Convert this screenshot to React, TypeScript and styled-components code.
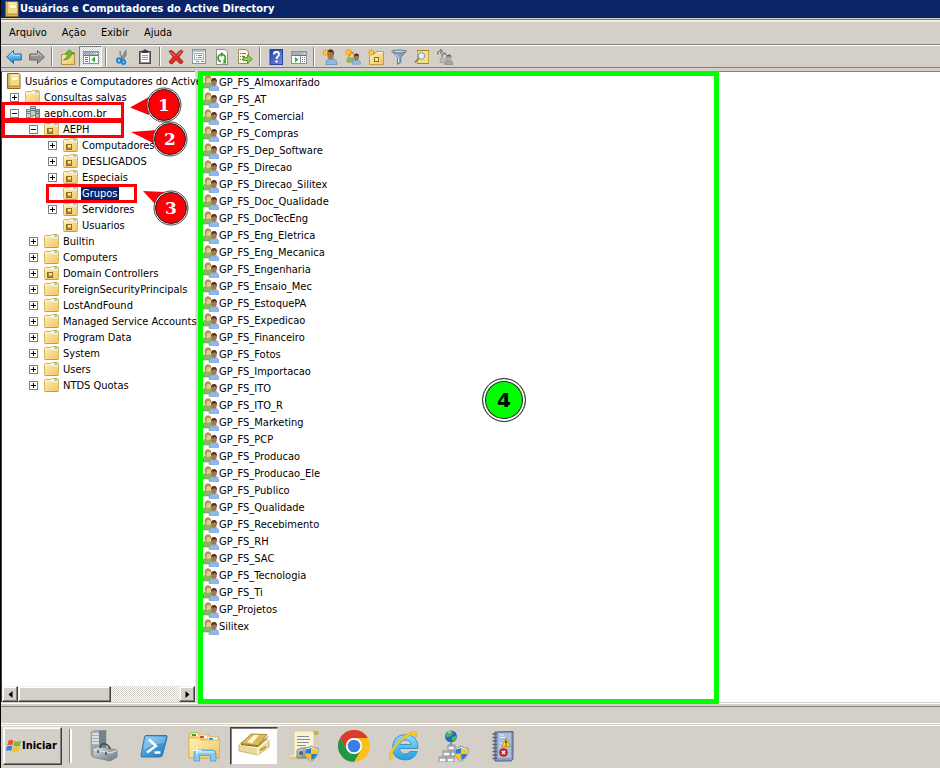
import React from "react";
import type { ReactNode } from "react";
import styled, { createGlobalStyle, css } from "styled-components";

const face = "#d4d0c8";
const navy = "#0a246a";
const red = "#fb0007";
const green = "#00ff00";

const GlobalStyle = createGlobalStyle`
  * { box-sizing: border-box; }
  body {
    margin: 0;
    background: ${face};
    color: #000;
    font: 11px/16px "DejaVu Sans Condensed", "Noto Sans", sans-serif;
  }
  button {
    margin: 0;
    padding: 0;
    border: 0;
    background: none;
    color: inherit;
    font: inherit;
  }
  ul { margin: 0; padding: 0; list-style: none; }
  svg { display: block; flex: none; }
`;

/* ---------- layout ---------- */

const Page = styled.div`
  display: flex;
  flex-direction: column;
  min-height: 100vh;
  background: ${face};
  border-left: 1px solid #000;
`;

const TitleBar = styled.header`
  display: flex;
  align-items: center;
  height: 18px;
  padding-left: 3px;
  background: ${navy};
`;

const Title = styled.h1`
  margin: 0;
  color: #fff;
  font-size: 11px;
  line-height: 18px;
  font-weight: 700;
  white-space: nowrap;
`;

const MenuBar = styled.nav`
  display: flex;
  align-items: center;
  height: 26px;
  margin-top: 1px;
  padding-top: 2px;
  border-top: 1px solid #808080;
  border-bottom: 1px solid #808080;
  box-shadow: inset 0 2px 0 #f1efea;
`;

const MenuItem = styled.button`
  padding: 0 7px 0 8px;
`;

const Toolbar = styled.div`
  display: flex;
  align-items: center;
  height: 23px;
  padding-left: 1px;
  border-top: 1px solid #fff;
  border-bottom: 1px solid #808080;
`;

const checker = css`
  background: repeating-conic-gradient(#fff 0 25%, ${face} 0 50%) 0 0 / 2px 2px;
`;

const ToolButton = styled.button<{ $pressed?: boolean }>`
  display: flex;
  align-items: center;
  justify-content: center;
  width: 23px;
  height: 21px;
  ${(p) =>
    p.$pressed &&
    css`
      ${checker}
      border: 1px solid;
      border-color: #808080 #fff #fff #808080;
    `}
`;

const ToolSeparator = styled.span`
  width: 2px;
  height: 19px;
  margin: 0 3px;
  border-left: 1px solid #808080;
  border-right: 1px solid #fff;
`;

const Workspace = styled.main`
  display: flex;
  flex: 1;
  margin-top: 3px;
  background: #fff;
`;

const TreePane = styled.section`
  position: relative;
  display: flex;
  flex-direction: column;
  flex: none;
  width: 194px;
  border-top: 1px solid #808080;
  border-left: 1px solid #404040;
`;

const TreeList = styled.ul`
  flex: 1;
  padding-top: 1px;
`;

const TreeRow = styled.li<{ $level: number }>`
  display: flex;
  align-items: center;
  height: 16px;
  padding-left: ${(p) => (p.$level === 0 ? 4 : p.$level * 19 - 15)}px;
  white-space: nowrap;
`;

const ExpanderCell = styled.span`
  display: flex;
  flex: none;
  width: 19px;
  padding-left: 4px;
`;

const Expander = styled.button`
  display: block;
  width: 9px;
  height: 9px;
`;

const NodeIcon = styled.span`
  flex: none;
  width: 18px;
`;

const NodeLabel = styled.button<{ $selected?: boolean }>`
  height: 14px;
  padding: 0 1px;
  line-height: 16px;
  ${(p) =>
    p.$selected &&
    css`
      background: ${navy};
      color: #fff;
    `}
`;

const Scrollbar = styled.div`
  display: flex;
  height: 16px;
  ${checker}
`;

const raised = css`
  background: ${face};
  border: 1px solid;
  border-color: #f4f2ee #404040 #404040 #f4f2ee;
  box-shadow: inset -1px -1px 0 #808080, inset 1px 1px 0 #fff;
`;

const ScrollArrow = styled.button`
  display: flex;
  align-items: center;
  justify-content: center;
  width: 16px;
  ${raised}
`;

const ScrollThumb = styled.div`
  flex: 92;
  ${raised}
`;

const ScrollRest = styled.div`
  flex: 69;
`;

const Splitter = styled.div`
  width: 3px;
  flex: none;
  background: ${face};
  border-left: 1px solid #ece9e2;
`;

const ListPane = styled.section`
  position: relative;
  flex: 1;
  padding: 2px 0 0 5px;
  border-top: 1px solid #808080;
`;

const GroupRow = styled.li`
  display: flex;
  align-items: center;
  height: 17px;
  white-space: nowrap;
`;

const StatusBar = styled.footer`
  height: 24px;
  border-top: 1px solid ${face};
  box-shadow: inset 0 1px 0 #fff, inset 0 3px 0 ${face}, inset 0 4px 0 #808080,
    inset 0 -1px 0 #fff, inset 0 -2px 0 ${face}, inset 0 -3px 0 #fff;
`;

const Taskbar = styled.footer`
  display: flex;
  align-items: center;
  height: 42px;
  padding: 1px 0 3px 2px;
`;

const StartButton = styled.button`
  display: flex;
  align-items: center;
  width: 59px;
  height: 38px;
  padding-left: 2px;
  font-weight: 700;
  ${raised}
`;

const TaskDivider = styled.span`
  width: 3px;
  height: 34px;
  margin: 0 7px;
  border-left: 1px solid #808080;
  border-right: 2px solid #fff;
`;

const TaskButton = styled.button<{ $active?: boolean }>`
  display: flex;
  align-items: center;
  justify-content: center;
  width: 48px;
  height: 38px;
  margin: 0 1px;
  ${(p) =>
    p.$active &&
    css`
      background: #fff;
      border: 1px solid;
      border-color: #404040 ${face} ${face} #404040;
      box-shadow: inset 1px 1px 0 #808080;
      padding-bottom: 5px;
    `}
`;

/* ---------- annotations lying over the window ---------- */

const RedFrame = styled.span<{ $x: number; $y: number; $w: number; $h: number }>`
  position: absolute;
  left: ${(p) => p.$x}px;
  top: ${(p) => p.$y}px;
  width: ${(p) => p.$w}px;
  height: ${(p) => p.$h}px;
  border: 3px solid ${red};
  pointer-events: none;
`;

const CalloutBox = styled.span<{ $x: number; $y: number }>`
  position: absolute;
  left: ${(p) => p.$x}px;
  top: ${(p) => p.$y}px;
  display: grid;
  width: 36px;
  height: 36px;
  place-items: center;
  color: #fff;
  font: 700 17px/36px "DejaVu Serif", serif;
  pointer-events: none;

  > * { grid-area: 1 / 1; }
  svg { overflow: visible; }
`;

const CalloutNumber = styled.span`
  position: relative;
`;

const GreenFrame = styled.div`
  position: absolute;
  inset: -1px auto -2px 0;
  width: 70.2%;
  border: 5px solid ${green};
  pointer-events: none;
`;

const GreenBadge = styled.span`
  position: absolute;
  left: 284px;
  top: 306px;
  display: flex;
  align-items: center;
  justify-content: center;
  width: 44px;
  height: 44px;
  border: 1px solid #333;
  border-radius: 50%;
  background: ${green};
  box-shadow: inset 0 0 0 2px #fff, inset 0 0 0 3px #222;
  font: 700 20px/40px "DejaVu Sans", sans-serif;
  pointer-events: none;
`;

function Callout({ n, x, y, tail }: { n: number; x: number; y: number; tail: string }) {
  return (
    <CalloutBox $x={x} $y={y}>
      <svg width="36" height="36" viewBox="0 0 36 36" aria-hidden="true">
        <path d={tail} fill={red} />
        <circle cx="18" cy="18" r="17" fill="#fff" stroke="#444" />
        <circle cx="18" cy="18" r="15.5" fill={red} stroke="#222" />
      </svg>
      <CalloutNumber>{n}</CalloutNumber>
    </CalloutBox>
  );
}

/* ---------- small icons ---------- */

function Icon({ children, size = 16, box = 16 }: { children: ReactNode; size?: number; box?: number }) {
  return (
    <svg width={size} height={size} viewBox={`0 0 ${box} ${box}`} aria-hidden="true">
      {children}
    </svg>
  );
}

const Gradients = () => (
  <svg width="0" height="0" aria-hidden="true">
    <defs>
      <linearGradient id="folder" x1="0" y1="0" x2="1" y2="1">
        <stop offset="0" stopColor="#fff0b4" /><stop offset="1" stopColor="#f0c566" />
      </linearGradient>
      <linearGradient id="blue" x1="0" y1="0" x2="0" y2="1">
        <stop offset="0" stopColor="#9be0fc" /><stop offset="1" stopColor="#1583d0" />
      </linearGradient>
      <linearGradient id="shell" x1="0" y1="0" x2="1" y2="1">
        <stop offset="0" stopColor="#7fc4ee" /><stop offset="1" stopColor="#1a72bd" />
      </linearGradient>
      <linearGradient id="steel" x1="0" y1="0" x2="1" y2="1">
        <stop offset="0" stopColor="#dce3e6" /><stop offset="1" stopColor="#66737b" />
      </linearGradient>
      <linearGradient id="help" x1="0" y1="0" x2="1" y2="1">
        <stop offset="0" stopColor="#1f3fae" /><stop offset="1" stopColor="#7091ea" />
      </linearGradient>
      <linearGradient id="ie" x1="0" y1="0" x2="0" y2="1">
        <stop offset="0" stopColor="#8fe0fb" /><stop offset="1" stopColor="#239dde" />
      </linearGradient>
    </defs>
  </svg>
);

const FolderShape = () => (
  <>
    <path d="M.5 3.5Q.5 2.5 1.5 2.5H6.500L8 1.500H13Q14.500 1.500 14.500 3V13.500Q14.500 14.500 13.500 14.500H1.500Q.5 14.500 .5 13.500Z" fill="url(#folder)" stroke="#dcb55c" />
    <path d="M7.500 2.500H14V4H6.500Z" fill="#fff" />
    <path d="M10 2.500H13.500V3.500H10Z" fill="#4c9be0" />
    <path d="M1.500 6V4H6.500L8 5H14" fill="none" stroke="#fff6cf" />
    <path d="M1 14.500H14" stroke="#c89c44" />
  </>
);

const Folder = () => <Icon><FolderShape /></Icon>;

const OuFolder = () => (
  <Icon>
    <FolderShape />
    <rect x="3.500" y="7.500" width="5" height="5" fill="#a8883a" stroke="#8d711f" />
    <path d="M5 8H8V10.500H5Z" fill="#f8e88c" />
  </Icon>
);

const BookIcon = () => (
  <Icon>
    <path d="M1.500 .5H13L14 1.500V15.500H1.500Z" fill="#f3d98a" stroke="#8c6a1c" />
    <path d="M2 1H4V15H2Z" fill="#d9b455" />
    <path d="M5 2H12V3H5Z" fill="#fff4c4" />
    <path d="M6 4H12V7H6Z" fill="#fffbe6" />
    <path d="M2 13.500H13.500" stroke="#c79a37" strokeWidth="2" />
  </Icon>
);

const DomainIcon = () => (
  <Icon>
    <rect x="5.500" y="1.500" width="5" height="9" fill="#c4ced4" stroke="#77858e" />
    <path d="M6 3.500H10M6 5.500H10" stroke="#5c6a73" />
    <rect x="1.500" y="4.500" width="4" height="8" fill="#d2dade" stroke="#7d8a92" />
    <rect x="10.500" y="4.500" width="4" height="8" fill="#aab6bd" stroke="#6e7b84" />
    <path d="M2 6.500H5M2 8.500H5M11 6.500H14M11 8.500H14" stroke="#67757e" />
    <circle cx="7.500" cy="11" r="1.500" fill="#7fc832" />
    <circle cx="4" cy="13.500" r="1.300" fill="#7fc832" />
    <circle cx="12" cy="13.500" r="1.300" fill="#7fc832" />
  </Icon>
);

const PeopleShape = ({ gray }: { gray?: boolean }) => (
  <>
    <path d="M0 13Q-.5 8 2 7L5 8 7.500 7Q10 8 9 13Z" fill={gray ? "#b8b8b8" : "#8db45e"} stroke={gray ? "#777" : "#668c46"} strokeWidth=".5" />
    <ellipse cx="5" cy="4.300" rx="2.800" ry="3.600" fill={gray ? "#ccc" : "#e9c594"} />
    <path d="M1.800 6.500Q.8 .4 5 .2 9 .4 8.300 6L6.800 3 3.800 3.200 3.400 7Z" fill={gray ? "#888" : "#b8924c"} />
    <path d="M6 15.500Q5.500 11.500 8.500 10.500L11 11.500 13.500 10.500Q16.200 11.500 15.700 15.500Z" fill={gray ? "#a6a6a6" : "#8fb8ea"} stroke={gray ? "#666" : "#5a8acb"} strokeWidth=".5" />
    <ellipse cx="11" cy="7.500" rx="2.700" ry="3.600" fill={gray ? "#aaa" : "#a8764c"} />
    <path d="M8.200 7.500Q7.600 3 11 3T13.900 7.500L12.800 5.600 9.500 5.600Z" fill={gray ? "#666" : "#4a3222"} />
  </>
);

const GroupIcon = () => <Icon><PeopleShape /></Icon>;

const Star = () => (
  <>
    <path d="M3.500 0V7M0 3.500H7M1 1L6 6M6 1L1 6" stroke="#f0a020" strokeWidth="1.100" />
    <circle cx="3.500" cy="3.500" r="1.500" fill="#ffd24a" />
  </>
);

const PlusMinus = ({ open }: { open?: boolean }) => (
  <svg width="9" height="9" viewBox="0 0 9 9" aria-hidden="true">
    <rect x=".5" y=".5" width="8" height="8" fill="#fff" stroke="#808080" />
    <path d={open ? "M2 4.500H7" : "M2 4.500H7M4.500 2V7"} stroke="#000" />
  </svg>
);

const Arrow = ({ fill, stroke, flip }: { fill: string; stroke: string; flip?: boolean }) => (
  <Icon>
    <g transform={flip ? "translate(16 0) scale(-1 1)" : undefined}>
      <path d="M.7 8L7.500 1.500V5H15.300V11H7.500V14.500Z" fill={fill} stroke={stroke} strokeLinejoin="round" />
      <path d="M3 7.500L7 4V6.300H14" fill="none" stroke="#fff" strokeOpacity=".5" />
    </g>
  </Icon>
);

const WindowShape = () => (
  <>
    <rect x=".5" y="2.500" width="15" height="12" fill="#fff" stroke="#8a929a" />
    <path d="M1 3H15V6H1Z" fill="#a5b0ba" />
    <path d="M1 6.500H15" stroke="#6c7680" />
    <path d="M11 4.500H12M13 4.500H14" stroke="#fff" />
  </>
);

const tools: (null | { label: string; pressed?: boolean; icon: ReactNode })[] = [
  { label: "Voltar", icon: <Arrow fill="url(#blue)" stroke="#1c6fb4" /> },
  { label: "Avançar", icon: <Arrow fill="#959595" stroke="#666" flip /> },
  null,
  {
    label: "Um nível acima",
    icon: (
      <Icon>
        <path d="M1.500 5.500H5L6.500 3.500H14.500V15.500H1.500Z" fill="url(#folder)" stroke="#b98f3d" />
        <path d="M3.500 11Q7.500 9 7.500 5H5L9.500 .8 14 5H11.500Q10.500 10.500 3.500 11Z" fill="#6cc030" stroke="#38821a" strokeWidth=".7" />
      </Icon>
    ),
  },
  {
    label: "Mostrar árvore do console",
    pressed: true,
    icon: (
      <Icon>
        <WindowShape />
        <path d="M2 8.500H5M2 10.500H5M2 12.500H5" stroke="#6c7680" />
        <path d="M6.500 7V14" stroke="#8a929a" />
        <path d="M12 7.500V13.500L8.500 10.500Z" fill="#2fae22" />
      </Icon>
    ),
  },
  null,
  {
    label: "Recortar",
    icon: (
      <Icon>
        <path d="M7 10L12 1V6L9 11Z" fill="#8b98a2" stroke="#66737c" strokeWidth=".7" />
        <path d="M8 10L6 2 6 6 9.500 11Z" fill="#e6ecf0" stroke="#66737c" strokeWidth=".7" />
        <ellipse cx="5" cy="11.500" rx="2" ry="2.200" fill="none" stroke="#1f83d6" strokeWidth="1.900" />
        <ellipse cx="9.500" cy="13" rx="1.700" ry="2" fill="none" stroke="#1f83d6" strokeWidth="1.900" />
      </Icon>
    ),
  },
  {
    label: "Copiar",
    icon: (
      <Icon>
        <rect x="2.500" y="2.500" width="11" height="12" fill="#fff" stroke="#4a4a4a" />
        <rect x="3.500" y="3.500" width="9" height="10" fill="none" stroke="#8c8c8c" />
        <path d="M5 1.500H6.500L7 .5H9L9.500 1.500H11V4H5Z" fill="#3a3a3a" />
        <path d="M5 6.500H11M5 8.500H11M5 10.500H11" stroke="#9a9a9a" />
      </Icon>
    ),
  },
  null,
  {
    label: "Excluir",
    icon: (
      <Icon>
        <path d="M1 2.500Q3 .5 4.500 2L8 5.500 12 1.500Q14 .8 15 2.500L10.800 8 15 12.500Q14.500 15 12 14.500L8 10.800 4 15Q1.500 15 1.200 12.500L5.200 8Z" fill="#dc2a22" stroke="#a81814" strokeWidth=".8" />
        <path d="M2 3L7 7M13.500 2.500L9.500 6.500" stroke="#f38279" />
      </Icon>
    ),
  },
  {
    label: "Propriedades",
    icon: (
      <Icon>
        <rect x="1.500" y=".5" width="13" height="14" fill="#f4f6f8" stroke="#88949d" />
        <path d="M2 2H14" stroke="#b8c4ce" strokeWidth="2" />
        <rect x="3.500" y="4.500" width="9" height="6" fill="#fff" stroke="#a2b2c0" />
        <path d="M5 6.500H6M7 6.500H11M5 8.500H6M7 8.500H11" stroke="#4f8cc4" />
        <path d="M5 12.500H8M10 12.500H13" stroke="#7e95aa" />
      </Icon>
    ),
  },
  {
    label: "Atualizar",
    icon: (
      <Icon>
        <path d="M2.500 .5H11L13.500 3V15.500H2.500Z" fill="#fff" stroke="#8e8e8e" />
        <path d="M7 12.500A3.500 3.500 0 0 1 8 5.500M9.500 5.800A3.500 3.500 0 0 1 9.500 12" fill="none" stroke="#38a52a" strokeWidth="1.800" />
        <path d="M7 3L10.500 5.500 7 8ZM12 10.500V14.500H8Z" fill="#38a52a" />
      </Icon>
    ),
  },
  {
    label: "Exportar lista",
    icon: (
      <Icon>
        <path d="M1.500 .5H9L11.500 3V14.500H1.500Z" fill="#fdf6d8" stroke="#9a8f6a" />
        <path d="M3 4.500H4M5 4.500H9M3 7.500H4M5 7.500H8M3 10.500H4M5 10.500H8" stroke="#77735f" />
        <path d="M6 8.500H10.500V6L15.500 10 10.500 14V11.500H6Z" fill="#8cd04c" stroke="#3f8a20" strokeWidth=".8" />
      </Icon>
    ),
  },
  null,
  {
    label: "Ajuda",
    icon: (
      <Icon>
        <rect x="2" y=".5" width="12.500" height="15" fill="url(#help)" stroke="#2443a0" />
        <path d="M5.800 5.500Q5.800 3 8.400 3T11 5.300Q11 6.800 9.500 7.700 8.500 8.500 8.500 10" fill="none" stroke="#fff" strokeWidth="1.800" />
        <circle cx="8.500" cy="12.500" r="1.200" fill="#fff" />
      </Icon>
    ),
  },
  {
    label: "Mostrar painel de ações",
    icon: (
      <Icon>
        <WindowShape />
        <path d="M9.500 7V14" stroke="#8a929a" />
        <path d="M11 8.500H12M13 8.500H14M11 10.500H12M13 10.500H14M11 12.500H12M13 12.500H14" stroke="#4f7ea8" />
        <path d="M4 8V13.500L7.500 10.800Z" fill="#2fae22" />
      </Icon>
    ),
  },
  null,
  {
    label: "Novo usuário",
    icon: (
      <Icon>
        <path d="M4 15.500Q3.500 11 7 9.500L9 10.500 11 9.500Q15.500 11 15 15.500Z" fill="#8fb8ea" stroke="#4a78b4" strokeWidth=".6" />
        <ellipse cx="8.500" cy="5.800" rx="3.300" ry="4.800" fill="#a8764c" />
        <path d="M5.300 6.500Q4.500 .2 8.500 .2T12 6.500L10.800 3.200 7 3.200Z" fill="#4a3222" />
        <Star />
      </Icon>
    ),
  },
  {
    label: "Novo grupo",
    icon: (
      <Icon>
        <g transform="translate(2 2) scale(.86)"><PeopleShape /></g>
        <Star />
      </Icon>
    ),
  },
  {
    label: "Nova unidade organizacional",
    icon: (
      <Icon>
        <path d="M1.500 4.500H7L8.500 2.500H15.500V15.500H1.500Z" fill="url(#folder)" stroke="#c39a45" />
        <path d="M10 3.500H15" stroke="#fff" />
        <rect x="6.500" y="8.500" width="4" height="4" fill="#f8e88c" stroke="#8d711f" />
        <Star />
      </Icon>
    ),
  },
  {
    label: "Filtro",
    icon: (
      <Icon>
        <path d="M.8 2H15.200L9.800 8.500V13.500L6.500 15.300V8.500Z" fill="#86a4bc" stroke="#4c6c88" strokeWidth=".8" />
        <ellipse cx="8" cy="2.500" rx="7" ry="1.500" fill="#bcd2e2" stroke="#4c6c88" strokeWidth=".8" />
        <path d="M4.500 5L7.500 8.500V13.500" fill="none" stroke="#e4eff6" />
      </Icon>
    ),
  },
  {
    label: "Localizar",
    icon: (
      <Icon>
        <path d="M3.500 1.500H14.500V14.500H3.500Z" fill="#f3de8c" stroke="#c7a63c" />
        <path d="M3 1.500H15M3 14.500H15" stroke="#a8832a" />
        <path d="M5 9L1 13.500" stroke="#9c7a3a" strokeWidth="1.800" />
        <circle cx="7.500" cy="7" r="3.300" fill="#e4f2fb" stroke="#8296a4" />
      </Icon>
    ),
  },
  {
    label: "Adicionar a um grupo",
    icon: (
      <Icon>
        <g transform="translate(3 3) scale(.82)"><PeopleShape gray /></g>
        <path d="M.8 5.500Q0 1.500 4 2M3 0L5.500 2.200 3 4.500" fill="none" stroke="#555" />
      </Icon>
    ),
  },
];

/* ---------- taskbar icons ---------- */

const Shield = () => (
  <g transform="translate(16 16) scale(1.1)">
    <path d="M6.500 0Q9.500 2 13 2.200 13.500 10 6.500 14-.5 10 0 2.200 3.500 2 6.500 0Z" fill="#e9edf0" stroke="#7e8a92" strokeWidth=".8" />
    <path d="M6.500 1.500V7H1.200V3.200Q4.500 3 6.500 1.500ZM6.500 7H11.800Q11 10.800 6.500 12.800Z" fill="#2a78d0" />
    <path d="M6.500 1.500V7H11.800V3.200Q8.500 3 6.500 1.500ZM6.500 7H1.200Q2 10.800 6.500 12.800Z" fill="#fbc61c" />
  </g>
);

const WindowsFlag = () => (
  <Icon>
    <path d="M2.500 2.500Q5 1 7.500 2.500L6.500 7.300Q4 6 1.300 7.300Z" fill="#e8582a" />
    <path d="M8.500 3Q11 4.500 15 2.800L13.800 7.800Q10.500 9 7.500 7.800Z" fill="#7cba2e" />
    <path d="M1 8.300Q3.800 7 6.300 8.300L5.200 13Q2.800 11.700 0 13Z" fill="#2f83d8" />
    <path d="M7.200 8.800Q10.200 10 13.500 8.800L12.300 13.800Q9.200 15 6.200 13.800Z" fill="#fbc224" />
  </Icon>
);

const tasks: { label: string; active?: boolean; icon: ReactNode }[] = [
  {
    label: "Gerenciador de Servidores",
    icon: (
      <>
        <path d="M3 2L8 0 18 0V25L10 28 3 25Z" fill="#a3adb3" stroke="#7f8a91" strokeWidth=".6" />
        <path d="M11 .5H18V25L11 28Z" fill="#75828a" />
        <path d="M4 4H11M4 7H11M4 10H11M4 13H11" stroke="#eef2f3" strokeWidth="1.300" />
        <circle cx="6" cy="22" r="1" fill="#7ce03c" />
        <path d="M5 19L10 16.500 29 20V27L22 31 5 27Z" fill="url(#steel)" stroke="#6c7980" strokeWidth=".7" />
        <path d="M5 19.500L22.500 23 29 20.500" fill="none" stroke="#e5eaec" />
        <path d="M12 18Q13 13 17 14T22 19" fill="none" stroke="#3f4a50" strokeWidth="1.600" />
        <path d="M10 20V23M18 22V25" stroke="#4a565d" strokeWidth="1.600" />
      </>
    ),
  },
  {
    label: "Windows PowerShell",
    icon: (
      <>
        <path d="M8 5.500H28Q29.500 5.500 29 7.500L24.500 25Q24 27 22 27H4Q2.500 27 3 25L6.500 7Q7 5.500 8 5.500Z" fill="url(#shell)" stroke="#2c78b4" />
        <path d="M8 7H27.500L26 13Q16 13 5.500 20Z" fill="#fff" fillOpacity=".25" />
        <path d="M11 9.500L18 16 9 22.500M16.500 22.500H22.500" fill="none" stroke="#fff" strokeWidth="2.400" />
      </>
    ),
  },
  {
    label: "Windows Explorer",
    icon: (
      <>
        <path d="M1 5Q1 2.500 3 2.500H10L12 5H21L23 7H30Q31.500 7 31.500 9V28H1Z" fill="#f1d27a" stroke="#d6ad4a" strokeWidth=".8" />
        <path d="M3.500 3.500H9.500V6H3.500Z" fill="#fff" /><path d="M4 4H8V6H4Z" fill="#27a527" />
        <path d="M11.500 5.500H19V8H11.500Z" fill="#fff" /><path d="M12 6H16V8H12Z" fill="#e0482c" />
        <path d="M20 7.500H29V10H20Z" fill="#fff" /><path d="M21 8H25V10H21Z" fill="#2c8ee4" />
        <path d="M1 8H12L13 10H31.500V28H1Z" fill="url(#folder)" stroke="#d8b04a" strokeWidth=".8" />
        <path d="M6 31V24Q6 20 10 20H24Q28 20 28 24V31H22.500V25.500H11.500V31Z" fill="#84c8ee" stroke="#4c9cd0" strokeWidth=".8" />
        <path d="M8 22H26" stroke="#c9ecfc" strokeWidth="1.500" />
        <path d="M9 16V25M4.500 20.500H13.500" stroke="#e9fbff" />
      </>
    ),
  },
  {
    label: "Usuários e Computadores do Active Directory",
    active: true,
    icon: (
      <>
        <path d="M1 16L13 9 31 12V19L20 27 1 23Z" fill="#eadb9a" stroke="#bfa95c" strokeWidth=".8" />
        <path d="M1 16L20 20 31 12M20 20V27" fill="none" stroke="#fff6c8" strokeWidth="1.400" />
        <path d="M3 15.500L13 6 29 6.500 20 17.500Z" fill="#d9bd54" stroke="#9a7b22" strokeWidth=".8" />
        <path d="M9 14L16 7 21 7 14 15.500Z" fill="#fff7d0" />
        <path d="M3 16.500L20 18.500 30 8.500" fill="none" stroke="#745a14" />
        <path d="M22 22.500L28 18.500" stroke="#b3994a" strokeWidth="2" />
      </>
    ),
  },
  {
    label: "Políticas de grupo",
    icon: (
      <>
        <path d="M6 1H29Q31 2 30 4.500H26V28H3Q0 28 1 25H6Z" fill="#fbf3d2" stroke="#d9c88e" strokeWidth=".8" />
        <path d="M25 1H29Q31.500 2 30 5H26Z" fill="#c6af62" />
        <path d="M1 26.500H17V29.500H3Z" fill="#dcc98a" />
        <path d="M9 6.500H21M9 9.500H22M9 12.500H21M9 15.500H18" stroke="#8490a8" strokeWidth="1.200" />
        <path d="M9 20L13 18H22V28H9Z" fill="url(#steel)" stroke="#77838a" />
        <circle cx="13" cy="23" r="2" fill="#51606a" />
        <Shield />
      </>
    ),
  },
  {
    label: "Google Chrome",
    icon: (
      <>
        <circle cx="16" cy="16" r="16" fill="#fbc116" />
        <path d="M2.140 8A16 16 0 0 1 29.860 8H16A8 8 0 0 0 9.070 20Z" fill="#dd3b30" />
        <path d="M2.140 8A16 16 0 0 0 16 32L22.930 20A8 8 0 0 1 9.070 20Z" fill="#239647" />
        <circle cx="16" cy="16" r="8" fill="#fff" />
        <circle cx="16" cy="16" r="6.300" fill="#3b7de8" />
      </>
    ),
  },
  {
    label: "Internet Explorer",
    icon: (
      <>
        <path d="M30 18.500H11.500Q12 24 17 24 20.500 24 22 21.500H29.300Q26.500 30 17 30 4.500 29.500 4.500 17.500 5 5 17.500 4.500 30.500 5 30 18.500ZM11.700 14.500H23Q22.500 10 17.500 10T11.700 14.500Z" fill="url(#ie)" stroke="#2788c4" strokeWidth=".8" fillRule="evenodd" />
        <path d="M2.500 30.500Q-2 25 8 13.500 20 1 27 1.500 30 2.500 28 7.500 28 4 24.500 4.800 17 6 8.500 16 2 25.500 4.500 28 3.500 30 2.500 30.500Z" fill="#fbcb2c" stroke="#e0a414" strokeWidth=".6" />
      </>
    ),
  },
  {
    label: "Sites e serviços",
    icon: (
      <>
        <circle cx="13" cy="6.500" r="6" fill="#2867c8" />
        <path d="M8 3.500Q12 0 14 1.500 16 4 12.500 6.500 10 6 8.500 8ZM14 7.500Q18 5 18.500 7 17.500 11.500 14 11Z" fill="#43c14c" />
        <path d="M10 2.500Q12 1 13 2.500" stroke="#d6f4ff" fill="none" />
        <path d="M13 13V16" stroke="#77818a" strokeWidth="2" />
        <path d="M10 15H17V20H10ZM5 21H12V26H5ZM13 21H20V26H13ZM1 27H8V32H1ZM9 27H16V32H9Z" fill="#f3f5f6" stroke="#858e95" />
        <path d="M10 16H17M5 22H12M13 22H20M1 28H8M9 28H16" stroke="#9aa4ab" strokeWidth="1.500" />
        <Shield />
      </>
    ),
  },
  {
    label: "Visualizador de Eventos",
    icon: (
      <>
        <path d="M7 2L25 1.500V29L23 31H7Z" fill="#8a9cbc" stroke="#4e5f82" />
        <path d="M10 3H23V28H10Z" fill="#a9bfe0" />
        <path d="M12 5H16M12 7.500H17M12 13H15M12 16H15M12 25H15" stroke="#e9f1fb" />
        <path d="M4.500 4H9M4.500 7.500H9M4.500 11H9M4.500 14.500H9M4.500 18H9M4.500 21.500H9M4.500 25H9M4.500 28.500H9" stroke="#566078" strokeWidth="1.300" />
        <path d="M18 8L22.500 16.500H13.500Z" fill="#ffd52c" stroke="#b58c10" strokeWidth=".8" />
        <path d="M18 10.500V13.500M18 14.500V15.500" stroke="#222" strokeWidth="1.300" />
        <circle cx="15.500" cy="22.500" r="4" fill="#cf2c30" stroke="#8e1418" strokeWidth=".6" />
        <path d="M14 21L17 24M17 21L14 24" stroke="#fff" strokeWidth="1.400" />
      </>
    ),
  },
];

/* ---------- data ---------- */

type Node = { level: number; label: string; icon: ReactNode; open?: boolean; leaf?: boolean; selected?: boolean };

const nodes: Node[] = [
  { level: 0, label: "Usuários e Computadores do Active", icon: <BookIcon />, leaf: true },
  { level: 1, label: "Consultas salvas", icon: <Folder /> },
  { level: 1, label: "aeph.com.br", icon: <DomainIcon />, open: true },
  { level: 2, label: "AEPH", icon: <OuFolder />, open: true },
  { level: 3, label: "Computadores", icon: <OuFolder /> },
  { level: 3, label: "DESLIGADOS", icon: <OuFolder /> },
  { level: 3, label: "Especiais", icon: <OuFolder /> },
  { level: 3, label: "Grupos", icon: <OuFolder />, leaf: true, selected: true },
  { level: 3, label: "Servidores", icon: <OuFolder /> },
  { level: 3, label: "Usuarios", icon: <OuFolder />, leaf: true },
  { level: 2, label: "Builtin", icon: <Folder /> },
  { level: 2, label: "Computers", icon: <Folder /> },
  { level: 2, label: "Domain Controllers", icon: <OuFolder /> },
  { level: 2, label: "ForeignSecurityPrincipals", icon: <Folder /> },
  { level: 2, label: "LostAndFound", icon: <Folder /> },
  { level: 2, label: "Managed Service Accounts", icon: <Folder /> },
  { level: 2, label: "Program Data", icon: <Folder /> },
  { level: 2, label: "System", icon: <Folder /> },
  { level: 2, label: "Users", icon: <Folder /> },
  { level: 2, label: "NTDS Quotas", icon: <Folder /> },
];

const groups = [
  "GP_FS_Almoxarifado", "GP_FS_AT", "GP_FS_Comercial", "GP_FS_Compras", "GP_FS_Dep_Software",
  "GP_FS_Direcao", "GP_FS_Direcao_Silitex", "GP_FS_Doc_Qualidade", "GP_FS_DocTecEng",
  "GP_FS_Eng_Eletrica", "GP_FS_Eng_Mecanica", "GP_FS_Engenharia", "GP_FS_Ensaio_Mec",
  "GP_FS_EstoquePA", "GP_FS_Expedicao", "GP_FS_Financeiro", "GP_FS_Fotos", "GP_FS_Importacao",
  "GP_FS_ITO", "GP_FS_ITO_R", "GP_FS_Marketing", "GP_FS_PCP", "GP_FS_Producao",
  "GP_FS_Producao_Ele", "GP_FS_Publico", "GP_FS_Qualidade", "GP_FS_Recebimento", "GP_FS_RH",
  "GP_FS_SAC", "GP_FS_Tecnologia", "GP_FS_Ti", "GP_Projetos", "Silitex",
];

export default function App() {
  return (
    <Page>
      <GlobalStyle />
      <TitleBar>
        <BookIcon />
        <Title>Usuários e Computadores do Active Directory</Title>
      </TitleBar>
      <MenuBar>
        {["Arquivo", "Ação", "Exibir", "Ajuda"].map((m) => (
          <MenuItem key={m}>{m}</MenuItem>
        ))}
      </MenuBar>
      <Toolbar role="toolbar">
        {tools.map((t, i) =>
          t ? (
            <ToolButton key={i} aria-label={t.label} aria-pressed={t.pressed} $pressed={t.pressed}>
              {t.icon}
            </ToolButton>
          ) : (
            <ToolSeparator key={i} />
          ),
        )}
      </Toolbar>

      <Workspace>
        <TreePane>
          <TreeList role="tree">
            {nodes.map((n) => (
              <TreeRow key={n.label} role="treeitem" $level={n.level} aria-selected={!!n.selected}>
                {n.level > 0 && (
                  <ExpanderCell>
                    {!n.leaf && (
                      <Expander aria-label={`${n.open ? "Recolher" : "Expandir"} ${n.label}`}>
                        <PlusMinus open={n.open} />
                      </Expander>
                    )}
                  </ExpanderCell>
                )}
                <NodeIcon>{n.icon}</NodeIcon>
                <NodeLabel $selected={n.selected}>{n.label}</NodeLabel>
              </TreeRow>
            ))}
          </TreeList>
          <Scrollbar>
            <ScrollArrow aria-label="Rolar para a esquerda">
              <svg width="5" height="7" viewBox="0 0 5 7"><path d="M4.500 0V7L.5 3.500Z" /></svg>
            </ScrollArrow>
            <ScrollThumb />
            <ScrollRest />
            <ScrollArrow aria-label="Rolar para a direita">
              <svg width="5" height="7" viewBox="0 0 5 7"><path d="M.5 0V7L4.500 3.500Z" /></svg>
            </ScrollArrow>
          </Scrollbar>
          <RedFrame $x={0} $y={30} $w={122} $h={19} />
          <RedFrame $x={0} $y={48} $w={122} $h={18} />
          <RedFrame $x={44} $y={112} $w={91} $h={19} />
          <Callout n={1} x={144} y={15} tail="M-16 20.500L3 10V28Z" />
          <Callout n={2} x={150} y={49} tail="M-21 11L5 9V24Z" />
          <Callout n={3} x={151} y={118} tail="M-10 1L12 2 2 14Z" />
        </TreePane>
        <Splitter />
        <ListPane>
          <ul>
            {groups.map((g) => (
              <GroupRow key={g}>
                <GroupIcon />
                {g}
              </GroupRow>
            ))}
          </ul>
          <GreenFrame />
          <GreenBadge>4</GreenBadge>
        </ListPane>
      </Workspace>

      <StatusBar />
      <Taskbar>
        <StartButton>
          <WindowsFlag />
          Iniciar
        </StartButton>
        <TaskDivider />
        {tasks.map((t) => (
          <TaskButton key={t.label} aria-label={t.label} $active={t.active}>
            <Icon size={32} box={32}>{t.icon}</Icon>
          </TaskButton>
        ))}
      </Taskbar>
      <Gradients />
    </Page>
  );
}
